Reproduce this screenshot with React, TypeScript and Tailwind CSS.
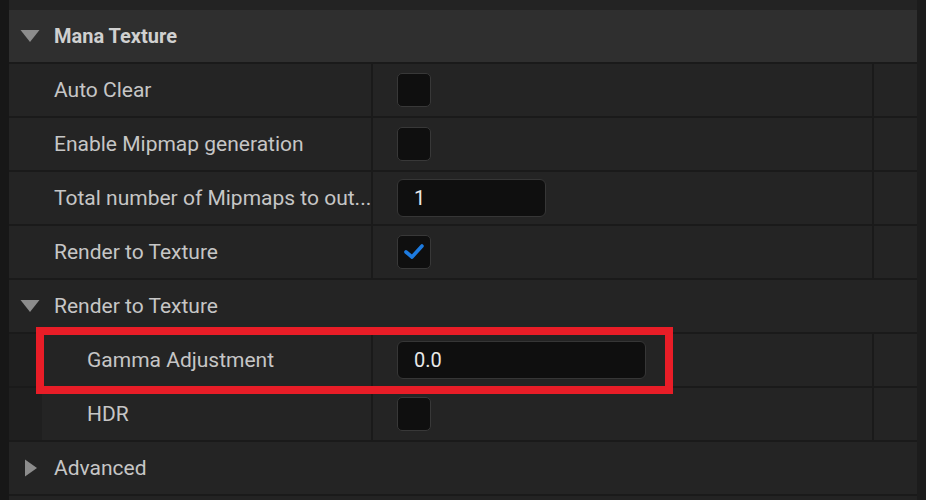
import type { ReactNode } from "react";

function Caret({ open }: { open: boolean }) {
  return open ? (
    <svg width="20" height="14" viewBox="0 0 20 14" className="shrink-0">
      <path d="M0.5 1 L19.5 1 L10 13 Z" fill="#8c8c8c" />
    </svg>
  ) : (
    <svg width="14" height="18" viewBox="0 0 14 18" className="shrink-0">
      <path d="M1 0.5 L13 9 L1 17.5 Z" fill="#8c8c8c" />
    </svg>
  );
}

function Checkbox({ checked }: { checked?: boolean }) {
  return (
    <div className="w-[34px] h-[34px] rounded-[5px] bg-[#0f0f0f] border border-[#383838] flex items-center justify-center">
      {checked && (
        <svg width="26" height="22" viewBox="0 0 26 22">
          <path
            d="M5 11 L11 16 L21 5"
            fill="none"
            stroke="#1d7be0"
            strokeWidth="3.6"
            strokeLinecap="round"
            strokeLinejoin="round"
          />
        </svg>
      )}
    </div>
  );
}

function NumberBox({ value, width }: { value: string; width: string }) {
  return (
    <div
      className={`${width} h-[38px] rounded-[6px] bg-[#0f0f0f] border border-[#363636] flex items-center pl-[16px] text-[20px] text-[#e8e8e8]`}
    >
      {value}
    </div>
  );
}

function PropRow({
  label,
  children,
  nested,
}: {
  label: string;
  children: ReactNode;
  nested?: boolean;
}) {
  return (
    <div className="flex h-[52px] bg-[#242424]">
      {nested && <div className="w-[33px] shrink-0 bg-[#1f1f1f]" />}
      <div
        className={`${nested ? "w-[329px]" : "w-[362px]"} pl-[45px] shrink-0 flex items-center pt-[1px]`}
      >
        <span className="whitespace-nowrap text-[21px] text-[#c6c6c6]">{label}</span>
      </div>
      <div className="w-[2px] bg-[#1a1a1a]" />
      <div className="w-[499px] shrink-0 flex items-center pl-[24px]">{children}</div>
      <div className="w-[2px] bg-[#1a1a1a]" />
      <div className="flex-1" />
    </div>
  );
}

function Sep() {
  return <div className="h-[2px] bg-[#1a1a1a]" />;
}

function GroupRow({ label, open }: { label: string; open: boolean }) {
  return (
    <div className="flex items-center h-[52px] bg-[#242424]">
      <div className={`w-[45px] flex ${open ? "pl-[11px]" : "pl-[15px]"}`}>
        <Caret open={open} />
      </div>
      <span className="text-[21px] text-[#c6c6c6] pt-[1px]">{label}</span>
    </div>
  );
}

export default function App() {
  return (
    <div
      className="w-[926px] h-[500px] bg-[#1a1a1a] flex overflow-hidden"
      style={{ fontFamily: "Roboto, 'Noto Sans', sans-serif" }}
    >
      <div className="w-[9px] shrink-0 bg-[#171717]" />
      <div className="w-[908px] shrink-0 bg-[#232323] pt-[10px]">
        <div className="flex items-center h-[52px] bg-[#2f2f2f]">
          <div className="w-[45px] flex pl-[11px]">
            <Caret open />
          </div>
          <span className="text-[20px] font-bold text-[#d0d0d0]">Mana Texture</span>
        </div>
        <Sep />
        <PropRow label="Auto Clear">
          <Checkbox />
        </PropRow>
        <Sep />
        <PropRow label="Enable Mipmap generation">
          <Checkbox />
        </PropRow>
        <Sep />
        <PropRow label="Total number of Mipmaps to out...">
          <NumberBox value="1" width="w-[149px]" />
        </PropRow>
        <Sep />
        <PropRow label="Render to Texture">
          <Checkbox checked />
        </PropRow>
        <Sep />
        <GroupRow label="Render to Texture" open />
        <Sep />
        <div className="relative">
          <PropRow label="Gamma Adjustment" nested>
            <NumberBox value="0.0" width="w-[249px]" />
          </PropRow>
          <div className="absolute left-[27px] top-[-7px] w-[637px] h-[67px] border-[8px] border-[#e81d27] pointer-events-none" />
        </div>
        <Sep />
        <PropRow label="HDR" nested>
          <Checkbox />
        </PropRow>
        <Sep />
        <GroupRow label="Advanced" open={false} />
        <Sep />
      </div>
      <div className="flex-1 bg-[#1c1c1c]" />
    </div>
  );
}
